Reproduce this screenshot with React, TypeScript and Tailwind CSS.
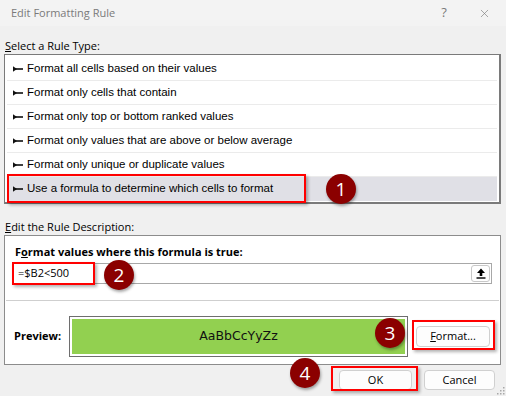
import { X } from "lucide-react"

const rules = [
  "Format all cells based on their values",
  "Format only cells that contain",
  "Format only top or bottom ranked values",
  "Format only values that are above or below average",
  "Format only unique or duplicate values",
  "Use a formula to determine which cells to format",
]

function RuleArrow() {
  return (
    <svg width="10" height="6" viewBox="0 0 10 6" className="shrink-0">
      <path d="M0 0.3 L4 3 L0 5.7 Z" fill="#111" />
      <rect x="1" y="2.2" width="9" height="1.6" fill="#111" />
    </svg>
  )
}

function Badge({ n, className }: { n: number; className: string }) {
  return (
    <div
      className={
        "absolute w-[30px] h-[30px] rounded-full bg-[#8b0000] text-white flex items-center justify-center text-[19px] shadow-[1px_2px_3px_rgba(0,0,0,0.35)] " +
        className
      }
    >
      {n}
    </div>
  )
}

function RedBox({ className }: { className: string }) {
  return (
    <div
      className={
        "absolute border-2 border-[#ff0000] shadow-[2px_2px_3px_rgba(0,0,0,0.3)] pointer-events-none " +
        className
      }
    />
  )
}

function DlgButton({ children, className }: { children: React.ReactNode; className: string }) {
  return (
    <button
      className={
        "h-[20px] rounded-[4px] border border-[#d0d0d0] bg-[#fdfdfd] text-[11px] text-black flex items-center justify-center " +
        className
      }
    >
      {children}
    </button>
  )
}

export default function App() {
  return (
    <div className="relative w-[506px] h-[396px] overflow-hidden bg-[#f0f0f0] font-['Open_Sans','Noto_Sans',sans-serif] text-[11px] text-black">
      {/* Title bar */}
      <div className="h-[26px] bg-[#f3f3f3] flex items-center pl-[11px]">
        <span className="text-[11px] text-[#7a7a7a] flex-1">Edit Formatting Rule</span>
        <span className="text-[13px] text-[#7a7a7a] w-[20px] text-center mr-[24px]">?</span>
        <X className="w-[13px] h-[13px] text-[#7a7a7a] mr-[15px]" strokeWidth={1.2} />
      </div>

      <div className="px-[4px] pr-[5px]">
        {/* Rule type */}
        <div className="h-[27px] flex items-end pl-[1px] pb-[2px] leading-none">
          <span>
            <span className="underline">S</span>elect a Rule Type:
          </span>
        </div>
        <div className="mt-[1px] h-[150px] bg-white border border-[#7a7a7a] border-r-2 border-b-2 p-[2px]">
          {rules.map((r, i) => (
            <div
              key={r}
              className={
                "h-[24px] flex items-center gap-[4px] pl-[6px] border-b font-['Liberation_Sans',sans-serif] text-[11.5px] " +
                (i === 5 ? "bg-[#e0e0e6] border-transparent" : "border-[#ebebeb]")
              }
            >
              <RuleArrow />
              <span>{r}</span>
            </div>
          ))}
        </div>

        {/* Description */}
        <div className="h-[31px] flex items-end pl-[1px] pb-[3px] leading-none">
          <span>
            <span className="underline">E</span>dit the Rule Description:
          </span>
        </div>
        <div className="h-[130px] bg-white border border-[#8c8c8c] flex flex-col">
          <div className="px-[8px] pt-[10px]">
            <div className="font-bold text-[11px] leading-none pl-[2px]">
              F<span className="underline">o</span>rmat values where this formula is true:
            </div>
            <div className="mt-[6px] h-[21px] border border-[#a8a8a8] flex items-center pl-[4px] pr-[1px]">
              <span className="flex-1 text-[11px]">=$B2&lt;500</span>
              <div className="w-[19px] h-[17px] rounded-[3px] border border-[#c8c8c8] bg-white flex items-center justify-center">
                <svg width="10" height="11" viewBox="0 0 10 11">
                  <path d="M5 0.5 L9 5 L6.3 5 L6.3 8 L3.7 8 L3.7 5 L1 5 Z" fill="#000" />
                  <rect x="0.5" y="9.3" width="9" height="1.4" fill="#000" />
                </svg>
              </div>
            </div>
          </div>
          <div className="mt-[16px] mx-[1px] border-t border-[#cfcfcf]" />
          <div className="flex items-center pl-[9px] pr-[10px] mt-[15px]">
            <span className="font-bold w-[55px]">Preview:</span>
            <div className="w-[339px] h-[41px] border border-[#6e6e6e] p-[2px]">
              <div className="h-full bg-[#92d050] flex items-center justify-center font-['DejaVu_Sans',sans-serif] text-[12.5px] text-[#111]">
                AaBbCcYyZz
              </div>
            </div>
            <div className="flex-1" />
            <DlgButton className="w-[74px] h-[21px]">
              <span className="underline">F</span>ormat...
            </DlgButton>
          </div>
        </div>

        {/* Footer buttons */}
        <div className="flex justify-end gap-[12px] pr-[6px] mt-[5px]">
          <DlgButton className="w-[73px]">OK</DlgButton>
          <DlgButton className="w-[71px]">Cancel</DlgButton>
        </div>
      </div>

      {/* Resize grip */}
      <svg className="absolute right-[1px] bottom-[1px]" width="9" height="9" viewBox="0 0 9 9">
        {[
          [7, 1],
          [4, 4],
          [7, 4],
          [1, 7],
          [4, 7],
          [7, 7],
        ].map(([x, y]) => (
          <rect key={`${x}-${y}`} x={x} y={y} width="1.5" height="1.5" fill="#a8a8a8" />
        ))}
      </svg>

      {/* Annotations */}
      <RedBox className="left-[7px] top-[174px] w-[299px] h-[29px]" />
      <RedBox className="left-[12px] top-[262px] w-[83px] h-[23px]" />
      <RedBox className="left-[412px] top-[320px] w-[83px] h-[30px]" />
      <RedBox className="left-[331px] top-[366px] w-[87px] h-[25px]" />
      <Badge n={1} className="left-[326px] top-[174px]" />
      <Badge n={2} className="left-[104px] top-[260px]" />
      <Badge n={3} className="left-[375px] top-[318px]" />
      <Badge n={4} className="left-[290px] top-[358px]" />
    </div>
  )
}
